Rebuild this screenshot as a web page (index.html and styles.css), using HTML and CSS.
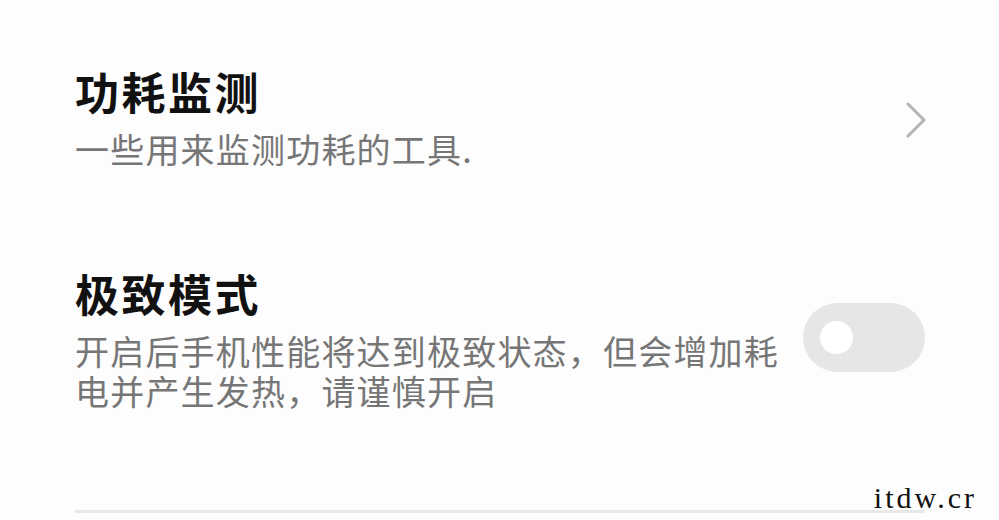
FILE: index.html
```html
<!DOCTYPE html>
<html lang="zh-CN">
<head>
    <meta charset="utf-8">
    <title>性能设置</title>
    <meta name="viewport" content="width=device-width, initial-scale=1.0">
    <link rel="stylesheet" href="styles.css">
</head>
<body>
    <div class="settings">
        <div class="item">
            <div class="text">
                <h2 class="title">功耗监测</h2>
                <p class="desc">一些用来监测功耗的工具.</p>
            </div>
            <svg class="chevron" width="24" height="38" viewBox="0 0 24 38">
                <path d="M4 3 L20 19 L4 35" fill="none" stroke="#b3b3b3" stroke-width="3" stroke-linecap="round" stroke-linejoin="round"/>
            </svg>
        </div>

        <div class="item">
            <div class="text">
                <h2 class="title">极致模式</h2>
                <p class="desc">开启后手机性能将达到极致状态，但会增加耗电并产生发热，请谨慎开启</p>
            </div>
            <div class="switch">
                <span class="knob"></span>
            </div>
        </div>

        <div class="divider"></div>
    </div>

    <div class="watermark">itdw.cr</div>
</body>
</html>
```

FILE: styles.css
```css
body {
    margin: 0;
    background-color: #fdfdfd;
    font-family: "Noto Sans CJK SC", "Noto Sans", sans-serif;
    width: 999px;
    height: 520px;
    overflow: hidden;
    position: relative;
}
.settings {
    padding: 61px 74px 0 75px;
}
.item {
    display: flex;
    align-items: flex-start;
    justify-content: space-between;
}
.item + .item {
    margin-top: 94px;
}
.text {
    width: 720px;
}
.title {
    margin: 0;
    font-size: 44px;
    line-height: 60px;
    font-weight: 700;
    letter-spacing: 2.5px;
    color: #111;
}
.desc {
    margin: 8px 0 0;
    font-size: 34px;
    line-height: 40px;
    letter-spacing: 1.2px;
    color: #767676;
}
.chevron {
    margin-top: 40px;
    margin-right: -3px;
}
.switch {
    width: 122px;
    height: 69px;
    border-radius: 35px;
    background-color: #e6e6e6;
    display: flex;
    align-items: center;
    padding-left: 17px;
    box-sizing: border-box;
    margin-top: 40px;
}
.knob {
    width: 33px;
    height: 33px;
    border-radius: 50%;
    background-color: #fff;
}
.divider {
    margin-top: 99px;
    height: 3px;
    background-color: #e8e8e8;
}
.watermark {
    position: absolute;
    right: 22px;
    bottom: 7px;
    font-family: "Liberation Serif", serif;
    font-size: 30px;
    line-height: 1;
    letter-spacing: 3px;
    color: #111;
}
```
